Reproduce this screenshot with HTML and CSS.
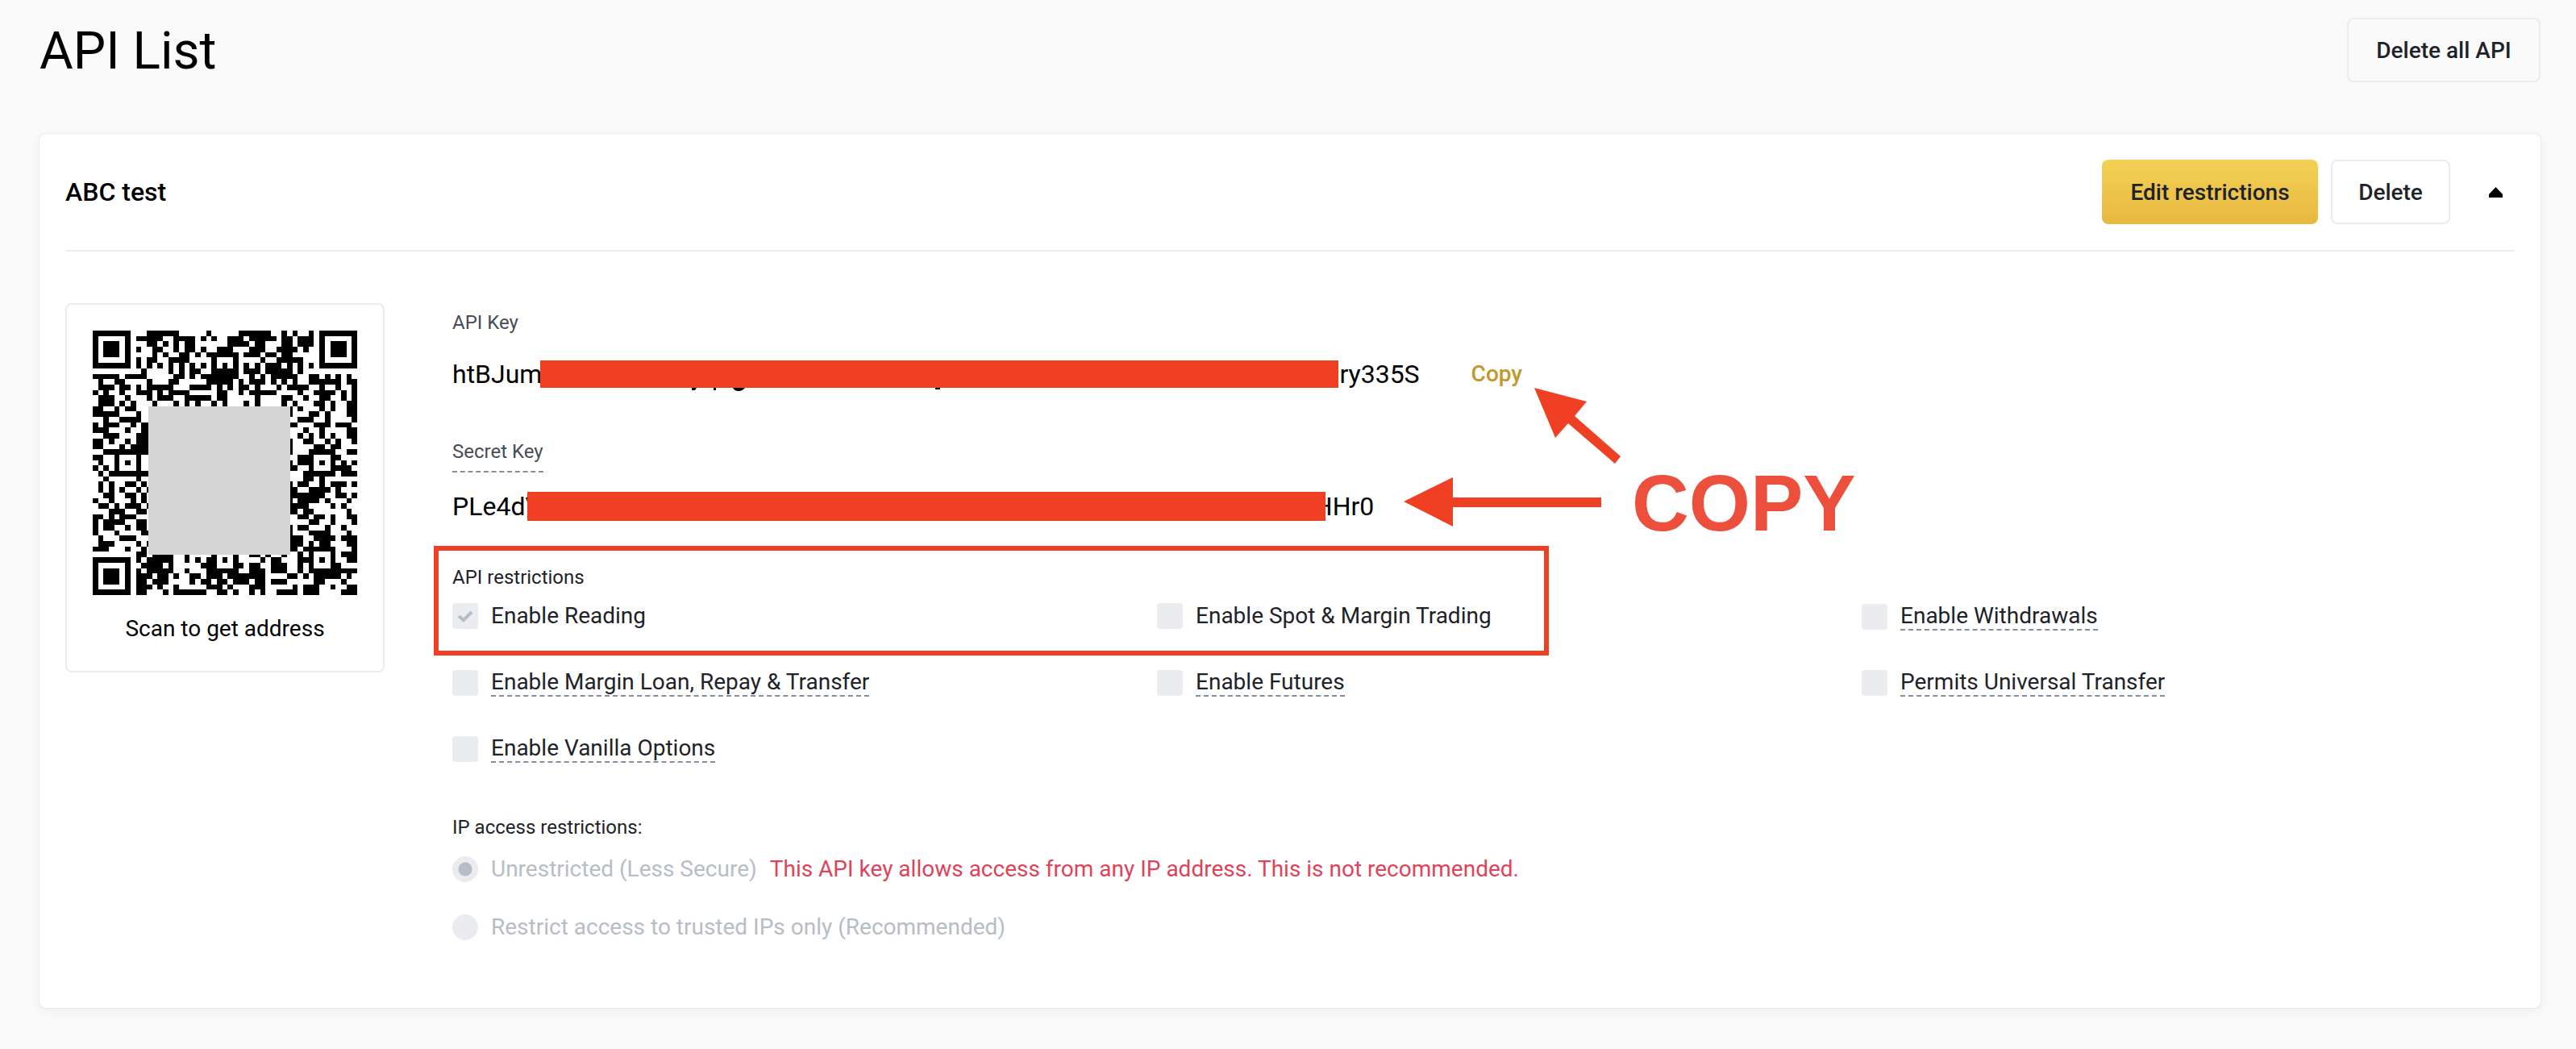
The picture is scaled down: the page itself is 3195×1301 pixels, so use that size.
FILE: index.html
```html
<!DOCTYPE html>
<html lang="en">
<head>
<meta charset="utf-8">
<meta name="viewport" content="width=device-width, initial-scale=1">
<title>API List</title>
<link rel="stylesheet" href="styles.css">
</head>
<body>
<main class="page">
  <header class="page-header">
    <h1 class="page-title">API List</h1>
    <button class="button button-all" type="button">Delete all API</button>
  </header>

  <section class="card">
    <header class="card-header">
      <h2 class="card-title">ABC test</h2>
      <div class="card-actions">
        <button class="button button-primary" type="button">Edit restrictions</button>
        <button class="button button-delete" type="button">Delete</button>
        <button class="toggle" type="button" aria-label="Collapse">
          <svg class="toggle-icon" viewBox="0 0 17 13" aria-hidden="true"><path d="M8.500 0L17 9V13H0V9Z"/></svg>
        </button>
      </div>
    </header>

    <div class="card-body">
      <figure class="qr-card">
        <svg class="qr" viewBox="0 0 328 328" role="img" aria-label="QR code">
          <g transform="scale(6.694)"><path id="qr-modules"/></g>
          <rect class="qr-logo" x="69" y="94" width="176" height="184"/>
        </svg>
        <figcaption class="qr-caption">Scan to get address</figcaption>
      </figure>

      <div class="details">
        <div class="key">
          <div class="key-label">API Key</div>
          <div class="key-row">
            <span>htBJum</span>
            <span class="redaction redaction-api">
              <svg class="descenders" viewBox="0 0 500 4" aria-hidden="true"><path d="M188 0h6l-2 3h-4zM215 0h3v3h-3zM239 0h15q-3 4-8 4t-7-4zM490 0h6v2h-6z"/></svg>
            </span>
            <span>ry335S</span>
            <button class="copy" type="button">Copy</button>
          </div>
        </div>

        <div class="key key-secret">
          <div class="key-label key-label-hint">Secret Key</div>
          <div class="key-row">
            <span>PLe4dV</span>
            <span class="redaction redaction-secret"></span>
            <span>HHr0</span>
          </div>
        </div>

        <fieldset class="group permissions">
          <legend class="group-title">API restrictions</legend>
          <div class="permission-grid">
            <label class="option"><input class="check" type="checkbox" checked disabled><span>Enable Reading</span></label>
            <label class="option"><input class="check" type="checkbox" disabled><span>Enable Spot &amp; Margin Trading</span></label>
            <label class="option"><input class="check" type="checkbox" disabled><span class="hint">Enable Withdrawals</span></label>
            <label class="option"><input class="check" type="checkbox" disabled><span class="hint">Enable Margin Loan, Repay &amp; Transfer</span></label>
            <label class="option"><input class="check" type="checkbox" disabled><span class="hint">Enable Futures</span></label>
            <label class="option"><input class="check" type="checkbox" disabled><span class="hint">Permits Universal Transfer</span></label>
            <label class="option"><input class="check" type="checkbox" disabled><span class="hint">Enable Vanilla Options</span></label>
            <div class="highlight"></div>
          </div>
        </fieldset>

        <fieldset class="group ip-access">
          <legend class="group-title">IP access restrictions:</legend>
          <div class="ip-options">
            <label class="option option-muted"><input class="radio" type="radio" name="ip" checked disabled><span>Unrestricted (Less Secure)</span><span class="warning">This API key allows access from any IP address. This is not recommended.</span></label>
            <label class="option option-muted"><input class="radio" type="radio" name="ip" disabled><span>Restrict access to trusted IPs only (Recommended)</span></label>
          </div>
        </fieldset>

        <svg class="arrows" viewBox="0 0 270 172" aria-hidden="true">
          <path d="M162 0L227 17L212 35L269 85L262 94L204 44L188 62Z"/>
          <path d="M0 141L61 111V136H245V148H61V172Z"/>
        </svg>
        <span class="note">COPY</span>
      </div>
    </div>
  </section>
</main>
<script src="qr.js"></script>
</body>
</html>
```
FILE: styles.css
```css
* {
  box-sizing: border-box;
}

body {
  margin: 0;
  background: #fafafa;
  color: #000;
  font-family: Roboto, "Liberation Sans", sans-serif;
  font-size: 28px;
}

h1,
h2,
figure,
fieldset {
  margin: 0;
}

button {
  font: inherit;
  cursor: pointer;
}

.page {
  padding: 22px 44px 48px 49px;
}

.page-header,
.card-header,
.card-actions,
.key-row {
  display: flex;
  align-items: center;
}

.page-header,
.card-header {
  justify-content: space-between;
}

.page-title {
  padding-top: 4px;
  font-size: 64px;
  font-weight: 400;
  line-height: 76px;
}

.button {
  height: 80px;
  padding: 0 28px;
  border: 2px solid #eaecef;
  border-radius: 8px;
  background: transparent;
  color: #1e2329;
  font-weight: 500;
}

.button-all {
  min-width: 240px;
}

.button-primary {
  min-width: 268px;
  border: 0;
  background: linear-gradient(#f3d155, #e8b840);
}

.button-delete {
  min-width: 148px;
}

.card {
  margin-top: 64px;
  padding: 32px 32px 84px;
  border-radius: 8px;
  background: #fff;
  box-shadow: 0 0 2px rgba(0, 0, 0, 0.12), 0 4px 16px rgba(0, 0, 0, 0.06);
}

.card-header {
  padding-bottom: 32px;
  border-bottom: 2px solid #eaecef;
}

.card-title {
  font-size: 32px;
  font-weight: 500;
}

.card-actions {
  gap: 16px;
}

.toggle {
  display: flex;
  align-items: center;
  justify-content: center;
  width: 48px;
  height: 48px;
  margin-left: 16px;
  padding: 0;
  border: 0;
  background: none;
}

.toggle-icon {
  width: 17px;
  height: 13px;
}

.card-body {
  display: flex;
  align-items: flex-start;
  gap: 84px;
  padding-top: 64px;
}

.qr-card {
  flex: none;
  width: 396px;
  padding: 32px 32px 34px;
  border: 2px solid #eaecef;
  border-radius: 8px;
  text-align: center;
}

.qr {
  display: block;
  width: 328px;
  height: 328px;
  shape-rendering: crispEdges;
}

.qr-logo {
  fill: #d5d5d5;
}

.qr-caption {
  margin-top: 24px;
  line-height: 36px;
}

.details {
  position: relative;
  flex: 1;
  padding-top: 8px;
}

.key-label {
  width: fit-content;
  color: #474d57;
  font-size: 24px;
  line-height: 32px;
}

.key-label-hint {
  padding-bottom: 8px;
  border-bottom: 2px dashed #848e9c;
}

.key-row {
  margin-top: 24px;
  font-size: 32px;
  line-height: 48px;
}

.key-secret {
  margin-top: 56px;
}

.key-secret .key-row {
  margin-top: 18px;
}

.redaction {
  position: relative;
  height: 34px;
  background: #ef4023;
}

.redaction-api {
  width: 990px;
  margin: 0 1px 0 -2px;
}

.redaction-secret {
  width: 990px;
  height: 36px;
  margin: 0 -14px 0 -18px;
}

.descenders {
  position: absolute;
  top: 100%;
  left: 0;
  width: 500px;
  height: 4px;
}

.copy {
  margin-left: 64px;
  padding: 0;
  border: 0;
  background: none;
  color: #c3972c;
  font-size: 28px;
  font-weight: 500;
}

.group {
  min-width: 0;
  padding: 0;
  border: 0;
}

.group-title {
  padding: 0;
  color: #1e2329;
  font-size: 24px;
  line-height: 32px;
}

.permissions {
  margin-top: 48px;
}

.permission-grid {
  position: relative;
  display: grid;
  grid-template-columns: repeat(3, 1fr);
  align-items: start;
  gap: 48px 64px;
  padding-top: 16px;
}

.option {
  display: flex;
  align-items: center;
  gap: 16px;
  color: #1e2329;
  line-height: 32px;
}

.hint {
  border-bottom: 2px dashed #848e9c;
}

.check,
.radio {
  flex: none;
  width: 32px;
  height: 32px;
  margin: 0;
  appearance: none;
  background: #eaecef;
}

.check {
  border-radius: 4px;
}

.check:checked {
  background: #eaecef url("data:image/svg+xml,%3Csvg xmlns='http://www.w3.org/2000/svg' viewBox='0 0 32 32'%3E%3Cpath d='M8 16L14 21L24 11' fill='none' stroke='%23b7bdc6' stroke-width='4'/%3E%3C/svg%3E");
}

.radio {
  border-radius: 50%;
}

.radio:checked {
  background: radial-gradient(circle, #b7bdc6 8px, #eaecef 9px);
}

.highlight {
  position: absolute;
  top: -55px;
  left: -23px;
  width: 1383px;
  height: 136px;
  border: 6px solid #ef4023;
  pointer-events: none;
}

.ip-access {
  margin-top: 64px;
}

.ip-options {
  display: grid;
  gap: 40px;
  padding-top: 20px;
}

.option-muted {
  color: #b7bdc6;
}

.warning {
  color: #e04359;
}

.arrows {
  position: absolute;
  top: 105px;
  left: 1180px;
  width: 270px;
  height: 172px;
  fill: #ef4023;
}

.note {
  position: absolute;
  top: 198px;
  left: 1463px;
  color: #ed4f3d;
  font-family: "Liberation Sans", Arial, sans-serif;
  font-size: 98px;
  font-weight: 700;
  line-height: 100px;
}
```
FILE: qr.js
```js
// Dark modules of each row, as single columns or first-last runs.
const rows = [
  "10-15,21,27-32,35,37,40",
  "8-12,15-18,20,22,25-27,29-33,35-36,38-40",
  "10-11,13,15,17-18,25-28,30-31,35-36,38-40",
  "8,11-12,15,17-18,20,23-25,29-31,34-37,39",
  "11,13,16-17,19,21-26,28-30,32-33,35-36",
  "8,10-11,14-17,22,26,31,34-38",
  "8,10,12,14,16,18,20,22,24,26,28,30,32-34,36,38,40",
  "9,14,16,18-19,22-26,28-30,32-36,38",
  "0-4,6-9,15-16,18,20-26,29,31,33-37,40-41,43,45,47",
  "1,4-5,10,14-15,21-25,27,29-31,33,35,37,40-45,47-48",
  "1-3,5-6,8,10-14,18-21,23,25,27-28,30,34,36-39,42,45,48",
  "0,2,5,8-10,12,14-17,23-24,27,29-33,38,41-44,46,48",
  "1-3,6,10,12-14,17-21,23-24,30,35-36,39,42-43,46,48",
  "1-3,5,7,11,15,17,19,22,24,28,30,35,37,41-42,44,47-48",
  "0-1,4,6-7,36,38,42,44,47-48",
  "0-4,8,36,40-41,43,47-48",
  "2,5-8,38-40,43,48",
  "0,2-4,7,9-10,36-37,41-43,45-47",
  "0-2,6,9-10,39,42,47-48",
  "2-4,8-10,38,40,42,44,47-48",
  "0-1,3,6,8-10,36,39-40,43,45,48",
  "0-1,5,7-10,36,41-42,44-45",
  "2-10,36,40-44,47-48",
  "0-1,4,8,38-40,44-45",
  "1,4,6,8,36,38-40,42,44,46,48",
  "0,2,4,8,36-37,40,44-47",
  "1,3-10,39-44,46-48",
  "2,8,39-40,42",
  "1,3,6-7,9,36,38-39,42,44-46,48",
  "1,3,5,8,10,36-37,40-43,45",
  "2-3,6-7,9,36-42,45-46,48",
  "0,3,7,9,36,38-41,43,47",
  "1-2,4,6-8,10,36-39,44,46",
  "3-5,8-9,36-37,39-40,47",
  "0-1,3,5-7,38-39,41-42,44,47-48",
  "0,2-5,8-9,40-41,44,48",
  "0,2-3,6,8-9,36,38-39,43,46",
  "0,4,9-10,36,40-43,47",
  "1,5-7,36-38,41-44,46-48",
  "1-3,8,10,36-38,40,42-43,47-48",
  "0-2,6,9,36-37,39-44,48",
  "8-9,11-14,17,22,26,29-30,32,35,38,40,44,46-48",
  "8,10-14,17,19,21-22,24,26,31,33-34,38-40,42,44,47-48",
  "9-12,14,20-22,26-27,29-30,33-35,38,40,44-45",
  "8,10-14,17,21-26,29-31,33-35,38,40-48",
  "8-10,12-13,15,18-19,21-23,25-31,36-37,39,41-45,47",
  "8-9,11-13,18,20-21,23-24,26-28,30-31,33-35,41-42,46",
  "8-10,12,15,21-23,25,29-31,37,39-41,44,47-48",
  "8-9,13,15-20,23-24,26,29,31,34-37,39-41,46-48"
];

let path = "";

rows.forEach((row, y) => {
  row.split(",").forEach((run) => {
    const [first, last = first] = run.split("-").map(Number);
    const width = last - first + 1;
    path += `M${first} ${y}h${width}v1h-${width}z`;
  });
});

// Finder patterns: an outer ring, a light ring and a solid centre.
[[0, 0], [42, 0], [0, 42]].forEach(([x, y]) => {
  path += `M${x} ${y}h7v7h-7zM${x + 1} ${y + 1}v5h5v-5zM${x + 2} ${y + 2}h3v3h-3z`;
});

document.getElementById("qr-modules").setAttribute("d", path);
```
